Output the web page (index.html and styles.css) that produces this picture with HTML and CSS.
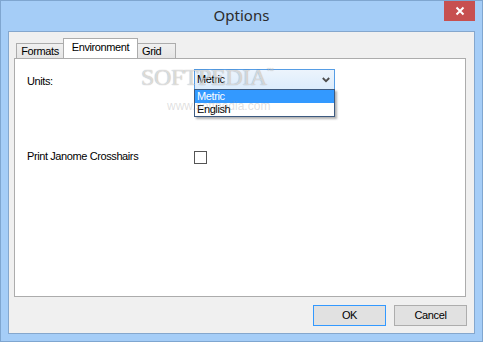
FILE: index.html
```html
<!DOCTYPE html>
<html lang="en">
<head>
  <meta charset="UTF-8">
  <title>Options</title>
  <link rel="stylesheet" href="styles.css">
</head>
<body>

  <div class="window">
    <div class="titlebar">
      <span class="title">Options</span>
      <div class="close">
        <svg width="10" height="10" viewBox="0 0 10 10">
          <path d="M1.5 1.5 L8.5 8.5 M8.5 1.5 L1.5 8.5" stroke="#fff" stroke-width="2"/>
        </svg>
      </div>
    </div>

    <div class="client">
      <div class="tabs">
        <div class="tab tab-formats">Formats</div>
        <div class="tab tab-active">Environment</div>
        <div class="tab tab-grid">Grid</div>
      </div>

      <div class="panel">
        <div class="row">
          <span class="label">Units:</span>
          <div class="combo">
            <div class="select">
              <span>Metric</span>
              <svg width="8" height="6" viewBox="0 0 8 6">
                <path d="M0.8 1 L4 4.2 L7.2 1" fill="none" stroke="#4d4d4d" stroke-width="1.8"/>
              </svg>
            </div>
            <ul class="list">
              <li class="selected">Metric</li>
              <li>English</li>
            </ul>
          </div>
        </div>

        <div class="row row-check">
          <span class="label">Print Janome Crosshairs</span>
          <span class="checkbox"></span>
        </div>

        <!-- watermark of the screenshot site -->
        <div class="watermark">SOFTPEDIA<sup>™</sup></div>
        <div class="watermark-url">www.softpedia.com</div>
      </div>

      <div class="buttons">
        <button class="btn btn-default">OK</button>
        <button class="btn">Cancel</button>
      </div>
    </div>
  </div>

</body>
</html>
```

FILE: styles.css
```css
body {
  margin: 0;
  font-family: 'Liberation Sans', Arial, sans-serif;
  font-size: 11px;
  letter-spacing: -0.4px;
  color: #000;
}

.window {
  box-sizing: border-box;
  width: 483px;
  height: 342px;
  display: flex;
  flex-direction: column;
  background: #a5cdf7;
  border: 1px solid #7fa6d0;
  padding: 0 7px 7px 7px;
}

/* title bar */
.titlebar {
  height: 30px;
  flex: none;
  display: grid;
  grid-template-columns: 1fr auto 1fr;
}

.title {
  grid-column: 2;
  font-family: 'Noto Sans', 'Open Sans', sans-serif;
  font-size: 15px;
  letter-spacing: 0;
  line-height: 28px;
  color: #2b2b2b;
}

.close {
  grid-column: 3;
  justify-self: end;
  width: 31px;
  height: 20px;
  background: #c75050;
  display: flex;
  align-items: center;
  justify-content: center;
}

/* client area */
.client {
  flex: 1;
  display: flex;
  flex-direction: column;
  background: #f0f0f0;
  border: 1px solid #85a7cd;
  padding: 6px 8px 7px 5px;
}

.tabs {
  height: 20px;
  display: flex;
  align-items: flex-end;
  padding-left: 2px;
}

.tab {
  box-sizing: border-box;
  height: 15px;
  line-height: 14px;
  border-top: 1px solid #acacac;
  background: linear-gradient(#f0f0f0, #e5e5e5);
  text-align: center;
}

.tab-formats {
  width: 47px;
  border-left: 1px solid #acacac;
}

.tab-active {
  position: relative;
  width: 75px;
  height: 21px;
  margin-bottom: -1px;
  line-height: 17px;
  padding-bottom: 3px;
  background: #fff;
  border: 1px solid #acacac;
  border-bottom: none;
}

.tab-grid {
  width: 38px;
  border-right: 1px solid #acacac;
  text-align: left;
  padding-left: 4px;
}

.panel {
  flex: 1;
  position: relative;
  background: #fff;
  border: 1px solid #acacac;
  padding: 10px 12px 0 12px;
}

.row {
  display: grid;
  grid-template-columns: 167px 1fr;
  align-items: start;
}

.row-check {
  margin-top: 59px;
}

.label {
  line-height: 14px;
  margin-top: 5px;
}

.row-check .label {
  margin-top: 0;
}

/* combo box, opened */
.combo {
  position: relative;
  width: 141px;
}

.select {
  box-sizing: border-box;
  height: 21px;
  display: flex;
  align-items: center;
  justify-content: space-between;
  padding: 0 4px 0 2px;
  line-height: 19px;
  border: 1px solid #569de5;
  background: linear-gradient(#ecf4fc, #dcecfc);
}

.list {
  position: absolute;
  top: 20px;
  left: 0;
  z-index: 2;
  box-sizing: border-box;
  width: 141px;
  margin: 0;
  padding: 0;
  list-style: none;
  background: #fff;
  border: 1px solid #3d5a80;
  box-shadow: 2px 2px 2px rgba(0, 0, 0, 0.3);
}

.list li {
  height: 13px;
  line-height: 13px;
  padding-left: 2px;
}

.list .selected {
  background: #3399ff;
  color: #fff;
}

.checkbox {
  box-sizing: border-box;
  width: 13px;
  height: 13px;
  margin-top: 2px;
  border: 1px solid #555;
  background: #fff;
}

.watermark {
  position: absolute;
  top: 5px;
  left: 126px;
  z-index: 3;
  pointer-events: none;
  font-family: 'Liberation Serif', serif;
  font-size: 24px;
  letter-spacing: -0.4px;
  color: rgba(255, 255, 255, 0.6);
  text-shadow: 0 0 1px rgba(0, 0, 0, 0.28), 0 0 1px rgba(0, 0, 0, 0.15);
}

.watermark sup {
  font-size: 7px;
  vertical-align: 12px;
}

.watermark-url {
  position: absolute;
  top: 40px;
  left: 152px;
  z-index: 3;
  pointer-events: none;
  font-size: 12px;
  letter-spacing: 0;
  color: rgba(150, 150, 150, 0.3);
}

/* dialog buttons */
.buttons {
  display: flex;
  justify-content: flex-end;
  gap: 8px;
  margin-top: 8px;
  margin-right: -1px;
}

.btn {
  box-sizing: border-box;
  width: 73px;
  height: 21px;
  padding: 0;
  font-family: inherit;
  font-size: 11px;
  letter-spacing: -0.4px;
  line-height: 19px;
  color: #000;
  background: #e1e1e1;
  border: 1px solid #adadad;
}

.btn-default {
  border-color: #3399ff;
}
```
